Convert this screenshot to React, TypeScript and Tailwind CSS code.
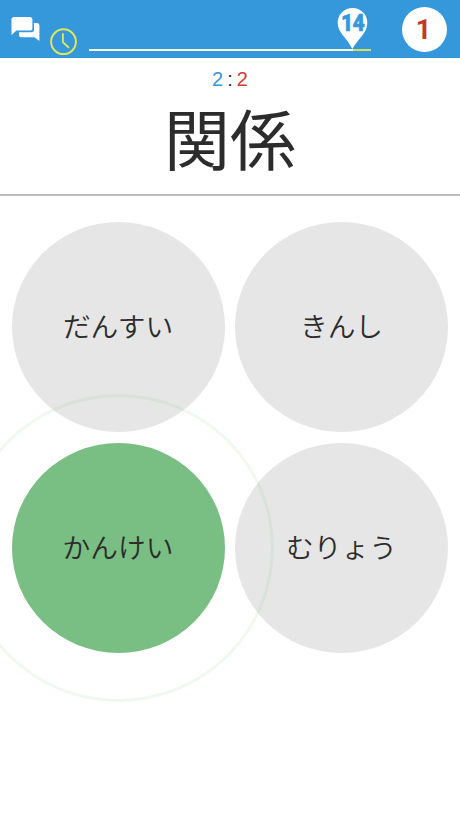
type AnswerProps = { label: string; selected?: boolean };

function Answer({ label, selected = false }: AnswerProps) {
  return (
    <button
      className={`relative flex h-[210px] w-[213px] items-center justify-center rounded-[50%] pb-[4px] ${
        selected ? "bg-[#79be83]" : "bg-[#e6e6e6]"
      }`}
    >
      <span className="text-[27.7px] leading-10 font-[350] whitespace-nowrap">{label}</span>
      {selected && (
        <span className="pointer-events-none absolute -top-[49px] -left-[49px] z-10 h-[308px] w-[311px] rounded-[50%] border-[3px] border-[#79be83]/10" />
      )}
    </button>
  );
}

function ChatIcon() {
  return (
    <svg className="mt-4 ml-[11px] h-[26px] w-[29px] shrink-0" viewBox="0 0 29 26" fill="white">
      <path d="M3 1H18.8Q21.4 1 21.4 3.6V12Q21.4 14.6 18.8 14.6H5.5L.5 19V3.6Q.5 1 3 1Z" />
      <path d="M23 7H26Q28.4 7 28.4 9.5V25L23.5 21.3H10.5Q8 21.3 8 18.8V16.3H20Q23 16.3 23 13.5Z" />
    </svg>
  );
}

function ClockIcon() {
  return (
    <svg className="mt-7 ml-[10px] h-7 w-7 shrink-0" viewBox="0 0 28 28" fill="none" stroke="#dfe65a">
      <circle cx="13.5" cy="13.7" r="12.4" strokeWidth="2" />
      <path d="M12.9 5.2V14.2L18.9 19.8" strokeWidth="1.9" />
    </svg>
  );
}

export default function App() {
  return (
    <main className="h-[818px] w-[460px] overflow-hidden bg-white font-['Noto_Sans_CJK_JP',sans-serif] text-[#2c2c2c]">
      <header className="flex h-[58px] bg-[#3498db]">
        <ChatIcon />
        <ClockIcon />
        <div className="relative ml-[11px] h-[58px] w-[282px] shrink-0">
          <div className="mt-[49px] flex h-[2px]">
            <div className="w-[264px] bg-white" />
            <div className="w-[18px] bg-[#d9df55]" />
          </div>
          <div className="absolute top-[7px] left-[248px] h-[43px] w-[31px]">
            <svg className="absolute inset-0" width="31" height="43" viewBox="0 0 31 43" fill="white">
              <path d="M15.5 1A14.8 14.8 0 0 1 30.3 15.8C30.3 26 22.5 30 15.3 42C9.5 30 .7 26 .7 15.8A14.8 14.8 0 0 1 15.5 1Z" />
            </svg>
            <span className="absolute top-[4px] left-0 flex w-full scale-x-[.88] justify-center font-[Roboto,sans-serif] text-[24px] leading-6 font-black tracking-[-0.8px] text-[#3498db] [-webkit-text-stroke:0.6px_#3498db]">14</span>
          </div>
        </div>
        <div className="mt-[7px] ml-[31px] flex h-[45px] w-[45px] shrink-0 items-center justify-center rounded-full bg-white pt-[2px] pr-[2px] font-[Roboto,sans-serif] text-[27px] leading-none font-bold text-[#c0392b]">1</div>
      </header>

      <section className="h-[138px] border-b-2 border-[#bdbdbd]">
        <div className="flex justify-center gap-[4px] pt-[9px] font-['Liberation_Sans',sans-serif] text-[20px] leading-6">
          <span className="text-[#3498db]">2</span>
          <span>:</span>
          <span className="text-[#d63b32]">2</span>
        </div>
        <h1 className="mt-[10px] text-center text-[66px] leading-[70px] font-normal">関係</h1>
      </section>

      <section className="mt-[26px] ml-[11.5px] grid w-[437px] grid-cols-[212.5px_212.5px] gap-[11px]">
        <Answer label="だんすい" />
        <Answer label="きんし" />
        <Answer label="かんけい" selected />
        <Answer label="むりょう" />
      </section>
    </main>
  );
}
